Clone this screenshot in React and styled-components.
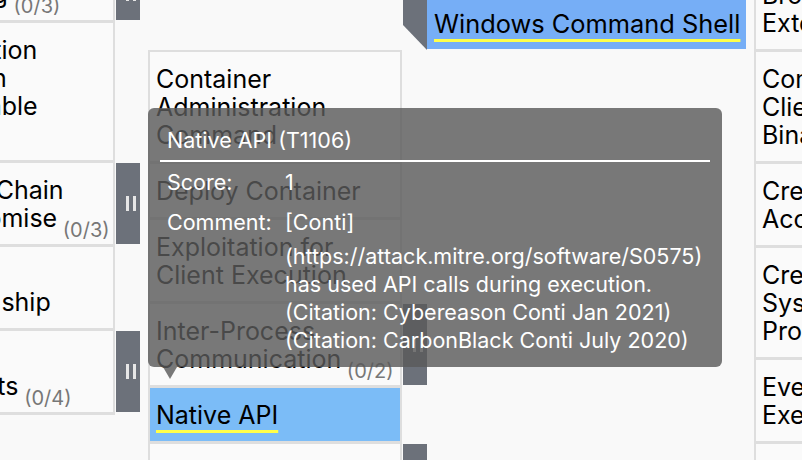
import React from 'react';
import styled, { createGlobalStyle } from 'styled-components';

const GlobalStyle = createGlobalStyle`
    html, body {
        margin: 0;
        padding: 0;
        background: #f9f9f9;
    }
    body {
        font-family: Inter, "Noto Sans", "Liberation Sans", sans-serif;
        -webkit-font-smoothing: antialiased;
    }
`;

const Viewport = styled.div`
    position: relative;
    width: 802px;
    height: 460px;
    overflow: hidden;
    background: #f9f9f9;
`;

const Matrix = styled.div`
    display: flex;
    align-items: flex-start;
    gap: 8px;
    margin-left: -101px;
`;

const Tactic = styled.div`
    display: flex;
    flex: none;
    flex-direction: column;
    margin-top: ${(props) => props.offset}px;
`;

const TechniqueRow = styled.div`
    display: flex;
    align-items: stretch;
`;

const Cell = styled.div`
    box-sizing: border-box;
    flex: none;
    width: ${(props) => props.width}px;
    padding: 13px 6px 12px;
    border: 2px solid #dedede;
    border-top-width: ${(props) => (props.first ? 2 : 0)}px;
    border-bottom-width: 3px;
    background: ${(props) => (props.scored ? '#7bbcf7' : '#fafafa')};
    color: #000;
    font-size: 25px;
    line-height: 28px;
    white-space: pre;
`;

const Spacer = styled.div`
    flex: none;
    width: ${(props) => props.width}px;
`;

const Name = styled.span`
    text-decoration: ${(props) => (props.commented ? 'underline' : 'none')};
    text-decoration-color: #ffff4a;
    text-decoration-thickness: 3px;
    text-underline-offset: 6px;
`;

const Count = styled.span`
    color: #777;
    font-size: 20px;
    line-height: 0;
    vertical-align: -10px;
`;

const Sidebar = styled.div`
    box-sizing: border-box;
    display: flex;
    flex: none;
    align-items: center;
    justify-content: center;
    width: 24px;
    margin: 0 0 ${(props) => (props.expanded ? 0 : 3)}px 1px;
    padding-left: 5px;
    background: ${(props) => (props.handle ? '#6c717a' : 'transparent')};
    clip-path: ${(props) =>
        props.expanded
            ? 'polygon(0 0, 100% 0, 100% 100%, 0 calc(100% - 25px))'
            : 'none'};
`;

const Grip = styled.span`
    box-sizing: content-box;
    width: 4px;
    height: 15px;
    border-left: 3px solid #e6e6e6;
    border-right: 3px solid #e6e6e6;
`;

const SubColumn = styled.div`
    display: flex;
    flex: none;
    flex-direction: column;
    width: ${(props) => props.width}px;
`;

const SubCell = styled.div`
    box-sizing: border-box;
    margin-bottom: 1px;
    padding: 14px 7px 11px;
    background: #76aef6;
    color: #000;
    font-size: 25.4px;
    line-height: 28px;
    white-space: nowrap;
`;

const Tooltip = styled.div`
    position: absolute;
    top: 108px;
    left: 148px;
    z-index: 2;
    box-sizing: border-box;
    width: 574px;
    padding: 12px 12px 7px;
    border-radius: 6px;
    background: rgba(90, 90, 90, 0.81);
    color: #fff;
    font-size: 21.5px;
    line-height: 28px;

    &::after {
        content: '';
        position: absolute;
        left: 15px;
        bottom: -12px;
        border-left: 7px solid transparent;
        border-right: 7px solid transparent;
        border-top: 12px solid rgba(90, 90, 90, 0.81);
    }
`;

const TooltipTitle = styled.div`
    padding: 6px 7px 0;
`;

const Rule = styled.hr`
    height: 2px;
    margin: 6px 0 0;
    border: 0;
    background: #fff;
`;

const Details = styled.div`
    display: grid;
    grid-template-columns: 118px 1fr;
`;

const DetailCell = styled.div`
    box-sizing: border-box;
    padding: 6px 7px;
    white-space: pre;
`;

const CommentLead = styled.div`
    margin-bottom: 6px;
`;

const initialAccess = [
    { name: 'Phishing', count: '(0/3)', handle: true },
    { name: 'Replication\nThrough\nRemovable\nMedia' },
    { name: 'Supply Chain\nCompromise', count: '(0/3)', handle: true },
    { name: 'Trusted\nRelationship' },
    { name: 'Valid\nAccounts', count: '(0/4)', handle: true }
];

const execution = [
    { name: 'Container\nAdministration\nCommand' },
    { name: 'Deploy Container' },
    { name: 'Exploitation for\nClient Execution' },
    { name: 'Inter-Process\nCommunication', count: '(0/2)', handle: true },
    { name: 'Native API', scored: true, commented: true },
    { name: 'Scheduled Task/Job', count: '(0/5)', handle: true }
];

const persistence = [
    { name: 'Browser\nExtensions' },
    { name: 'Compromise\nClient Software\nBinary' },
    { name: 'Create\nAccount', count: '(0/3)', handle: true },
    { name: 'Create or Modify\nSystem\nProcess', count: '(0/5)', handle: true },
    { name: 'Event Triggered\nExecution', count: '(0/16)', handle: true },
    { name: 'External Remote\nServices' }
];

const citations = [
    '(https://attack.mitre.org/software/S0575)',
    'has used API calls during execution.',
    '(Citation: Cybereason Conti Jan 2021)',
    '(Citation: CarbonBlack Conti July 2020)'
].join('\n');

const Technique = ({ technique, width, subWidth, first }) => (
    <TechniqueRow>
        <Cell width={width} first={first} scored={technique.scored}>
            <Name commented={technique.commented}>{technique.name}</Name>
            {technique.count && <Count>{'\u00a0' + technique.count}</Count>}
        </Cell>
        <Sidebar handle={technique.handle}>
            {technique.handle && <Grip />}
        </Sidebar>
        {subWidth && <Spacer width={subWidth} />}
    </TechniqueRow>
);

const App = () => (
    <Viewport>
        <GlobalStyle />
        <Matrix>
            <Tactic offset={-33}>
                {initialAccess.map((t) => (
                    <Technique key={t.name} technique={t} width={216} />
                ))}
            </Tactic>
            <Tactic offset={-4}>
                <TechniqueRow>
                    <Spacer width={254} />
                    <Sidebar handle expanded />
                    <SubColumn width={319}>
                        <SubCell>
                            <Name commented>Windows Command Shell</Name>
                        </SubCell>
                    </SubColumn>
                </TechniqueRow>
                {execution.map((t, i) => (
                    <Technique
                        key={t.name}
                        technique={t}
                        width={254}
                        subWidth={319}
                        first={i === 0}
                    />
                ))}
            </Tactic>
            <Tactic offset={-32}>
                {persistence.map((t) => (
                    <Technique key={t.name} technique={t} width={217} />
                ))}
            </Tactic>
        </Matrix>
        <Tooltip>
            <TooltipTitle>Native API (T1106)</TooltipTitle>
            <Rule />
            <Details>
                <DetailCell>Score:</DetailCell>
                <DetailCell>1</DetailCell>
                <DetailCell>Comment:</DetailCell>
                <DetailCell>
                    <CommentLead>[Conti]</CommentLead>
                    {citations}
                </DetailCell>
            </Details>
        </Tooltip>
    </Viewport>
);

export default App;
